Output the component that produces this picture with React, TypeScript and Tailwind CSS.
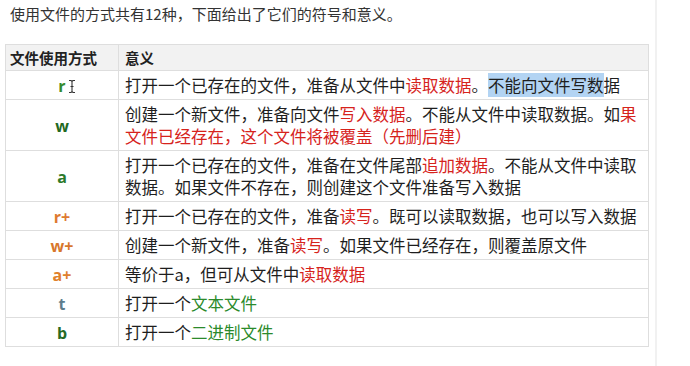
import type { ReactNode } from 'react';

const red = 'text-[#d6231c]';
const green = 'text-[#2b8a2b]';

interface Row {
  mode: string;
  modeColor: string;
  desc: ReactNode;
  cursor?: boolean;
}

// I-beam text cursor next to "r"
function IBeam() {
  return (
    <svg width="8" height="15" viewBox="0 0 8 15" className="absolute left-[10px] top-[4px]">
      <path d="M1 1.5h2l1 1 1-1h2M4 2.5v10M1 13.5h2l1-1 1 1h2M2.5 7.5h3" fill="none" stroke="#333" strokeWidth="1.1" />
    </svg>
  );
}

const rows: Row[] = [
  {
    mode: 'r',
    modeColor: 'text-[#358a2c]',
    cursor: true,
    desc: (
      <>
        打开一个已存在的文件，准备从文件中<span className={red}>读取数据</span>。
        <span className="bg-[#b3d4f3]">不能向文件写数</span>据
      </>
    ),
  },
  {
    mode: 'w',
    modeColor: 'text-[#23691f]',
    desc: (
      <>
        创建一个新文件，准备向文件<span className={red}>写入数据</span>。不能从文件中读取数据。如
        <span className={red}>果文件已经存在，这个文件将被覆盖（先删后建）</span>
      </>
    ),
  },
  {
    mode: 'a',
    modeColor: 'text-[#2c7a2a]',
    desc: (
      <>
        打开一个已存在的文件，准备在文件尾部<span className={red}>追加数据</span>。不能从文件中读取数据。如果文件不存在，则创建这个文件准备写入数据
      </>
    ),
  },
  {
    mode: 'r+',
    modeColor: 'text-[#de7a30]',
    desc: (
      <>
        打开一个已存在的文件，准备<span className={red}>读写</span>。既可以读取数据，也可以写入数据
      </>
    ),
  },
  {
    mode: 'w+',
    modeColor: 'text-[#d8772c]',
    desc: (
      <>
        创建一个新文件，准备<span className={red}>读写</span>。如果文件已经存在，则覆盖原文件
      </>
    ),
  },
  {
    mode: 'a+',
    modeColor: 'text-[#e0802c]',
    desc: (
      <>
        等价于a，但可从文件中<span className={red}>读取数据</span>
      </>
    ),
  },
  {
    mode: 't',
    modeColor: 'text-[#5e7d8c]',
    desc: (
      <>
        打开一个<span className={green}>文本文件</span>
      </>
    ),
  },
  {
    mode: 'b',
    modeColor: 'text-[#276a26]',
    desc: (
      <>
        打开一个<span className={green}>二进制文件</span>
      </>
    ),
  },
];

export default function App() {
  return (
    <div
      className="flex w-[690px] h-[366px] bg-white overflow-hidden text-[#222]"
      style={{ fontFamily: '"Noto Sans CJK SC", "Noto Sans", sans-serif' }}
    >
      <div className="w-[655px] shrink-0 pl-[5px]">
        <p className="pl-[5px] pt-[3px] text-[15px] leading-[22px] text-[#333]">
          使用文件的方式共有12种，下面给出了它们的符号和意义。
        </p>

        <table className="mt-[19px] w-[644px] border-collapse border border-[#dedede] table-fixed">
          <colgroup>
            <col className="w-[113px]" />
            <col />
          </colgroup>
          <thead>
            <tr className="bg-[#f2f2f2] h-[26px]">
              <th className="border border-[#dedede] text-left pl-[4px] text-[14.5px] font-bold leading-[22px]">
                文件使用方式
              </th>
              <th className="border border-[#dedede] text-left pl-[6px] text-[14.5px] font-bold leading-[22px]">
                意义
              </th>
            </tr>
          </thead>
          <tbody>
            {rows.map((row) => (
              <tr key={row.mode}>
                <td className="border border-[#dedede] text-center align-middle py-[2.5px] text-[16px] leading-[22px]">
                  <span
                    className={`relative inline-block font-bold leading-[22px] ${row.modeColor}`}
                    style={{ fontFamily: '"Open Sans", sans-serif' }}
                  >
                    {row.mode}
                    {row.cursor && <IBeam />}
                  </span>
                </td>
                <td className="border border-[#dedede] pl-[6px] pr-[4px] py-[2.5px] text-[16.5px] leading-[22.5px] text-[#1e1e1e]">
                  {row.desc}
                </td>
              </tr>
            ))}
          </tbody>
        </table>
      </div>
      <div className="flex-1 border-l-2 border-[#f1f1f1]" />
    </div>
  );
}
